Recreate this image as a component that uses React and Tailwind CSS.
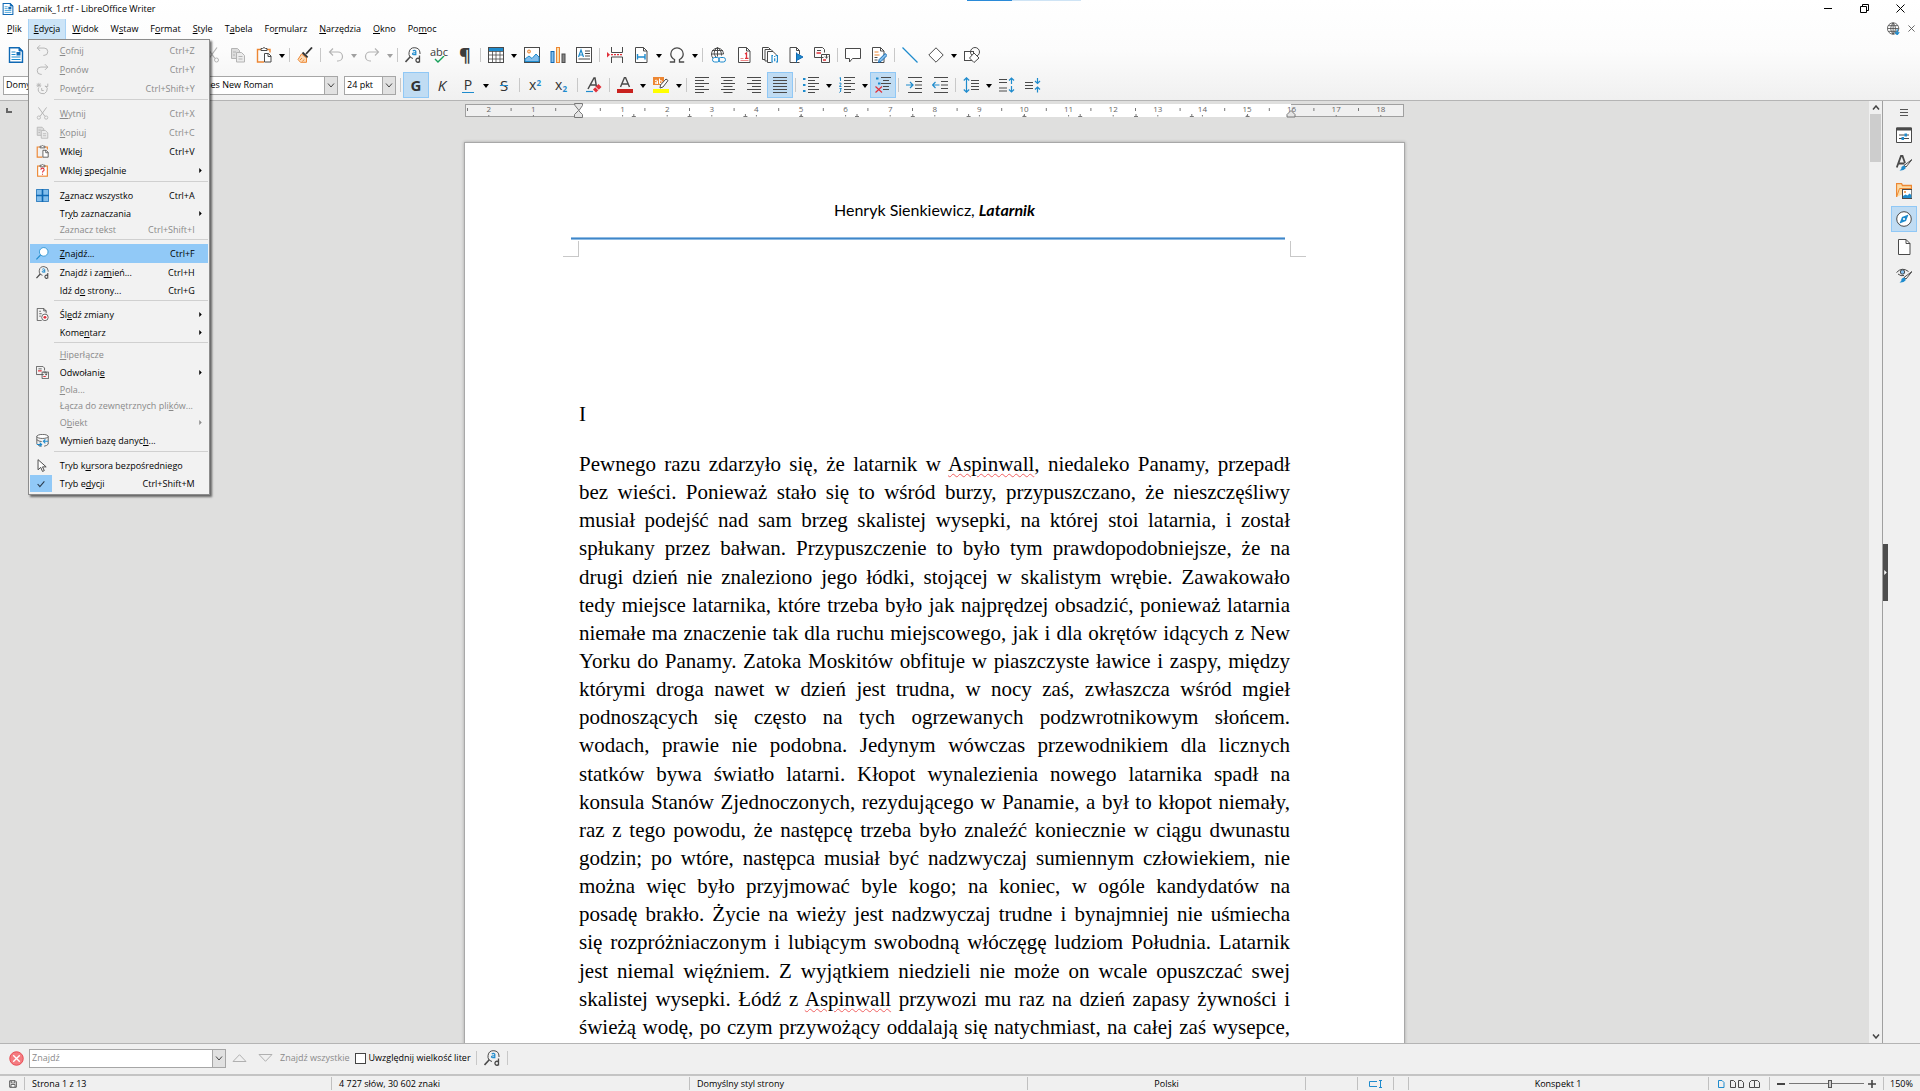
import { Fragment } from "react";
import clsx from "clsx";

const G = "#4a4a4a"; // icon outline
const B = "#1e8bcd"; // icon accent
const L = "#b4b4b4"; // disabled outline

const ICONS = {
  doc: (
    <>
      <path d="M1.500 .7h9.500l3.500 3.500v11H1.500z" fill="#fff" stroke="#1069b4" strokeWidth="1.4" />
      <path d="M11 .5v3.500h3.500z" stroke="#1069b4" fill="#1069b4" />
      <path d="M3.500 5h4M3.500 7.500h4M3.500 10h9M3.500 12.500h9" stroke="#1e8bcd" />
      <rect x="8.500" y="5" width="4" height="3.500" fill="#1069b4" />
    </>
  ),
  undo: <path d="M5 1.500 1.500 5l3.500 3.500M1.500 5h8.500a4.500 4.500 0 0 1 0 9h-1" stroke={L} strokeWidth="1.2" />,
  redo: <path d="M11 1.500 14.500 5 11 8.500M14.500 5H6a4.500 4.500 0 0 0 0 9h1" stroke={L} strokeWidth="1.2" />,
  repeat: (
    <>
      <path d="M3 7.500a5.500 5.500 0 1 0 8.500-3M14.500 2v3.500H11M7 7.500v3h2.500" stroke={L} strokeWidth="1.2" />
      <path d="M1 2l5 4M1 6l5-4M3.500 1v6M.5 4h6" stroke={L} />
    </>
  ),
  cut: (
    <>
      <path d="M3 .5 11 11.500M13 .5 5 11.500" stroke={L} strokeWidth="1.2" />
      <circle cx="3.500" cy="13" r="2" stroke={L} />
      <circle cx="12.500" cy="13" r="2" stroke={L} />
    </>
  ),
  copy: (
    <>
      <path d="M1.500 1.500h6l2 2v8h-8z" fill="#ddd" stroke={L} />
      <path d="M6.500 5.500h5l3 3v6.500h-8z" fill="#ececec" stroke={L} />
      <path d="M8.500 9.500h4M8.500 12h4M3 5h3M3 8h2" stroke={L} />
    </>
  ),
  paste: (
    <>
      <path d="M5 2.500H1.500v12.500H8M11 2.500h3v3" stroke="#ed8733" strokeWidth="1.4" />
      <path d="M5 3.500v-2h1.500L8 .5l1.500 1H11v2z" fill="#fff" stroke={G} />
      <path d="M8.500 6.500h4l2.500 2.500v6h-6.500z" fill="#fff" stroke={G} />
      <path d="M12 6.500V9.500h3" stroke={G} />
    </>
  ),
  pasteSpecial: (
    <>
      <rect x="2" y="2.500" width="12" height="12.500" fill="#fff" stroke="#ed8733" strokeWidth="1.4" />
      <path d="M5 3.500v-2h1.500L8 .5l1.500 1H11v2z" fill="#fff" stroke={G} />
      <path d="M6 7a2 2 0 1 1 2.500 2L8 10.500M8 12v1.200" stroke="#e0303a" strokeWidth="1.3" />
    </>
  ),
  brush: (
    <>
      <path d="M15 .5 9 7" stroke="#333" strokeWidth="1.8" />
      <path d="M5.500 5.500 10.500 10.500" stroke="#333" strokeWidth="2" />
      <path d="M4.500 7 1 12.500l2.500 2.800h6L9.500 11z" fill="#fbd9b5" stroke="#ed8733" />
      <path d="M3 13l2-2M5.500 14.500l1.500-2" stroke="#ed8733" />
    </>
  ),
  find: (
    <>
      <circle cx="9.500" cy="6" r="5.300" fill="#fff" stroke={B} />
      <path d="M5.500 10 .5 15.200" stroke={B} strokeWidth="1.5" />
    </>
  ),
  findReplace: (
    <>
      <path d="M15 7V6A5.500 5.500 0 1 0 8 11.500" stroke={G} />
      <path d="M5.500 9.500 .5 15" stroke={G} strokeWidth="1.6" />
      <path d="M7.800 4q1.700-1.300 3 .2v4M10.800 5.800q-3.300-.2-3.300 1.200.8 1.500 3.300 0" stroke={B} strokeWidth="1.2" />
      <path d="M14.500 8.500v7M14.500 12a2 2 0 1 0 0 2.500" stroke={G} strokeWidth="1.3" />
    </>
  ),
  table: (
    <>
      <rect x=".5" y=".5" width="15" height="15" fill="#fff" stroke={G} />
      <path d="M1 1h14v3H1z" fill={B} />
      <path d="M.5 4.500h15M.5 8h15M.5 12h15M4.500 4v11.500M8 4v11.500M12 4v11.500" stroke={G} strokeWidth=".8" />
    </>
  ),
  image: (
    <>
      <rect x=".5" y=".5" width="15" height="15" fill="#fff" stroke={G} />
      <circle cx="5" cy="4.500" r="1.500" fill="#fbd9b5" stroke="#ed8733" />
      <path d="M1 14.500V12l4-3 3 2.500 4-4.500 3 3v4.500z" fill="#83beec" stroke={B} />
    </>
  ),
  chart: (
    <>
      <rect x="1" y="4.500" width="3" height="11" fill="#83beec" stroke="#1069b4" />
      <rect x="6.500" y=".5" width="3" height="15" fill="#fbdca8" stroke="#ed8733" />
      <rect x="12" y="7" width="3" height="8.500" fill="#888" stroke={G} />
    </>
  ),
  textbox: (
    <>
      <rect x=".5" y=".5" width="15" height="15" fill="#fff" stroke={G} />
      <path d="M2.500 10 5 3l2.500 7M3.500 8h3" stroke={B} strokeWidth="1.2" />
      <path d="M9 4h5M9 6.500h5M9 9h5M2.500 12h11.500" stroke={G} />
    </>
  ),
  pageBreak: (
    <>
      <path d="M4.500 0v5.500h11V0M4.500 16v-6h11v6" stroke={G} />
      <path d="M4 7.700h12" stroke="#e0303a" strokeDasharray="2 1" strokeWidth="1.2" />
      <path d="M0 5v5.500l3-2.700z" fill="#e0303a" />
    </>
  ),
  field: (
    <>
      <path d="M2.500 .5h8l3.500 3.500v11.500H2.500z" fill="#fff" stroke={G} />
      <path d="M10.500 .5V4H14" stroke={G} />
      <path d="M4.500 7v5.500M12 7v5.500M4.500 10H12" stroke={B} strokeWidth="1.4" />
    </>
  ),
  omega: <path d="M.8 15h4.700v-2.500C2.500 11 1.800 9 1.800 7a6.200 6.200 0 0 1 12.400 0c0 2-.7 4-3.700 5.500V15h4.700" stroke={G} strokeWidth="1.3" />,
  link: (
    <>
      <path d="M4 12A6 6 0 1 1 13.500 7M7.500 .5c-4 3-4 6.500-1.500 9.500M7.500 .5c3 2.500 4 4.500 4 8M2 3.500h11M1 7h12.500M7.500 .5v9" stroke={G} />
      <rect x="2.500" y="10.500" width="7" height="4.500" rx="2.200" fill="#fff" stroke={B} />
      <rect x="8.500" y="10.500" width="7" height="4.500" rx="2.200" stroke={B} />
    </>
  ),
  footnote: (
    <>
      <path d="M2.500 .5h8l3.500 3.500v11.500H2.500z" fill="#fff" stroke={G} />
      <path d="M10.500 .5V4H14" stroke={G} />
      <path d="M9 7l1.500-1v5M9 11.300h3.500" stroke="#e0303a" strokeWidth="1.3" />
      <path d="M4.500 13.500h8M4.500 11.500h3" stroke="#e88" />
    </>
  ),
  endnote: (
    <>
      <path d="M3 12.500H.5v-12h6l2 2M5.500 14h-2.500V2.500h6l2 2" stroke={G} />
      <path d="M9.500 15.500h-4V4.500h5.500l3 3v1" fill="#fff" stroke={G} />
      <path d="M11 8.500h-1v6.500h1M14 8.500h1.500v6.500H14M12.700 9v1M12.700 11.200v3" stroke={B} strokeWidth="1.2" />
    </>
  ),
  bookmark: (
    <>
      <path d="M11.500 15.500H2V.5h6.500l3 3v4" fill="#fff" stroke={G} />
      <path d="M8.500 .5v3h3" stroke={G} />
      <path d="M8.500 5.500v10M8.500 6.500l6.500 3.500-6.500 3.500z" fill={B} stroke="#1069b4" />
    </>
  ),
  crossRef: (
    <>
      <path d="M9.500 10.500h-9V.5h8l2 2v3M3 3.500h4" stroke={G} />
      <path d="M2.500 6h4.500M9 13h3" stroke="#e0303a" strokeWidth="1.3" />
      <path d="M7.500 15.500v-8h8v8zM9 7.500h3.500v4M11 9.500l1.500 1.500 1.500-1.500" stroke={G} />
    </>
  ),
  comment: <path d="M.5 1.500h15v10H7.500L4.500 15v-3.500h-4z" fill="#fff" stroke={G} strokeLinejoin="round" />,
  track: (
    <>
      <path d="M1.500 .5h8l3.500 3.500v11.500H1.500z" fill="#fff" stroke={G} />
      <path d="M9.500 .5V4H13" stroke={G} />
      <path d="M3.500 5h4M3.500 8h5" stroke="#ed8733" />
      <path d="M3.500 10.500h3M3.500 13h3" stroke={G} />
      <path d="M7.500 15.500l.7-3 6-6 1.800 2-6 6z" fill="#83beec" stroke="#1069b4" />
    </>
  ),
  line: <path d="M.5 .5l15 15" stroke={B} strokeWidth="1.2" />,
  diamond: <path d="M8 .8 15.200 8 8 15.200.8 8z" fill="#fff" stroke={G} />,
  shapes: (
    <>
      <rect x=".5" y="4.500" width="9" height="9" stroke={G} fill="#fff" />
      <circle cx="11" cy="5" r="4.500" stroke={G} />
      <path d="M10 6l5 5-5 4.500L5.500 11z" stroke={G} fill="#fff" />
    </>
  ),
  clearFormat: (
    <>
      <path d="M2 12 8 1h1l1.500 9M4.500 8h6" stroke={G} strokeWidth="1.5" />
      <path d="M0 14.500h7" stroke={B} strokeWidth="1.200" />
      <path d="M7 12.500l5.500-5.500 3 3L10 15.500z" fill="#e0303a" />
      <path d="M9.500 10l3 3" stroke="#fff" />
    </>
  ),
  fontColor: (
    <>
      <path d="M3.500 10 7.500 .5h1L12.500 10M5 7h6" stroke={G} strokeWidth="1.4" />
      <path d="M0 12h16v4H0z" fill="#c9211e" />
    </>
  ),
  highlight: (
    <>
      <path d="M0 0h11v8H0z" fill="#ed8733" />
      <path d="M2 3.500q2-1 2.500.5v3M4.500 5q-2.500 0-2.500 1t2.500 0M6.500 1.500v5q3 .8 2.700-1.500T6.500 4" stroke="#fff" />
      <path d="M15 3.500 10 10l-3 1 .5-3 5.500-6z" fill="#fff" stroke={G} />
      <path d="M0 12h16v4H0z" fill="#ffff00" />
    </>
  ),
  left: <path d="M1 .5h14M1 3.500h9M1 6.500h14M1 9.500h9M1 12.500h14M1 15.500h9" stroke={G} />,
  center: <path d="M1 .5h14M3.500 3.500h9M1 6.500h14M3.500 9.500h9M1 12.500h14M3.500 15.500h9" stroke={G} />,
  right: <path d="M1 .5h14M6 3.500h9M1 6.500h14M6 9.500h9M1 12.500h14M6 15.500h9" stroke={G} />,
  justify: <path d="M1 .5h14M1 3.500h14M1 6.500h14M1 9.500h14M1 12.500h14M1 15.500h14" stroke={G} />,
  bullets: (
    <>
      <path d="M5 .5h11M5 3.500h7M5 6.500h11M5 9.500h7M5 12.500h11M5 15.500h7" stroke={G} />
      <path d="M0 1h2.500v2H0zM0 7h2.500v2H0zM0 13h2.500v2H0z" fill={B} />
    </>
  ),
  numbers: (
    <>
      <path d="M5 .5h11M5 3.500h7M5 6.500h11M5 9.500h7M5 12.500h11M5 15.500h7" stroke={G} />
      <path d="M.5 1 1.500.5v3.500M.3 6.200q2.400-.7 1.700 1L.5 9.500h2M.5 11.500h2L1.300 13q2 .8-1 2.500" stroke={B} />
    </>
  ),
  outline: (
    <>
      <path d="M6 .5h10M8 3.500h6M6 6.500h10M8 9.500h6M8 12.500h6" stroke={G} />
      <path d="M1 .5h2.500v2H1zM3 5.500h2.500v2H3z" fill={B} />
      <path d="M.5 9.500l6.500 6M7 9.500l-6.500 6" stroke="#e0303a" strokeWidth="1.2" />
    </>
  ),
  indent: (
    <>
      <path d="M2 .5h14M9 4.500h7M9 8h7M9 11.500h7M2 15.500h14" stroke={G} />
      <path d="M0 8h7M4 5l3 3-3 3" stroke={B} strokeWidth="1.200" />
    </>
  ),
  outdent: (
    <>
      <path d="M2 .5h14M9 4.500h7M9 8h7M9 11.500h7M2 15.500h14" stroke={G} />
      <path d="M7.500 8h-7M3.500 5l-3 3 3 3" stroke={B} strokeWidth="1.2" />
    </>
  ),
  spacing: (
    <>
      <path d="M8 3.500h8M8 6.500h8M8 9.500h8M8 12.500h8" stroke={G} />
      <path d="M3.500 1v14M.8 3.500 3.500.8l2.700 2.700M.8 12.500l2.700 2.700 2.700-2.700" stroke={B} strokeWidth="1.2" />
    </>
  ),
  spaceMore: (
    <>
      <path d="M0 2.500h8M0 5.500h8M0 11h8M0 14h8" stroke={G} />
      <path d="M12.500 7V1M10 3.500 12.500 1 15 3.500M12.500 9v6M10 12.500l2.500 2.500 2.500-2.500" stroke={B} strokeWidth="1.2" />
    </>
  ),
  spaceLess: (
    <>
      <path d="M0 5.500h8M0 8.500h8M0 11.500h8" stroke={G} />
      <path d="M12.500 1v5.500M10 4l2.500 2.500L15 4M12.500 15.500V10M10 12.500l2.500-2.500 2.500 2.500" stroke={B} strokeWidth="1.2" />
    </>
  ),
  selectAll: (
    <>
      <path d="M.5 .5h15v15H.5z" fill="#83beec" stroke="#1069b4" />
      <path d="M8 0v16M0 8h16" stroke="#1069b4" strokeWidth="2" />
    </>
  ),
  record: (
    <>
      <path d="M7 15.500H1.500V.5h8l3 3v3M4 4h2M4 7h3M4 10h2M9.500 .5v3h3" stroke={G} />
      <circle cx="11" cy="11.500" r="4" fill="#fff" stroke={G} />
      <circle cx="11" cy="11.500" r="1.800" fill="#e0303a" />
    </>
  ),
  database: (
    <>
      <path d="M1 3v9q2 3 6 3M15 3v9.500q-1.500 2-5 2.500M1 7q2.500 2.300 6 2.300" stroke={G} />
      <ellipse cx="8" cy="3" rx="7" ry="2.500" fill="#fff" stroke={G} />
      <path d="M15 9H9M11.500 6.500 9 9l2.500 2.500M1 13h6M4.500 10.500 7 13l-2.500 2.500" stroke={B} strokeWidth="1.3" />
    </>
  ),
  cursor: <path d="M2.500 .8v12.500l3.300-3 2.200 5 2.200-1-2.200-4.600h4.500z" fill="#fff" stroke={G} strokeWidth="1.200" />,
  check: <path d="M3.500 8l3 3.500 6-7" stroke="#2c3e50" strokeWidth="1.500" />,
  properties: (
    <>
      <path d="M.5 1h15v14.500H.5z" fill="#fff" stroke={G} />
      <path d="M.5 .5h15v3H.5z" fill={G} />
      <path d="M3 8h10M3 11.500h10" stroke={G} />
      <path d="M8.500 6.500h2.500v3H8.500zM5.500 10h2.500v3H5.500z" fill={B} />
    </>
  ),
  styles: (
    <>
      <path d="M.8 12.500 5 1h1.500l2.500 7M2.500 8.500h6" stroke={G} strokeWidth="1.8" />
      <path d="M16 4.500 10 12l-2-1.500z" fill="#fff" stroke={G} />
      <path d="M7.500 10.500q2.500.5 2 3-2 2.500-6 2 2.500-1.500 2-3.500z" fill={B} />
    </>
  ),
  gallery: (
    <>
      <path d="M.5 14v-13.500h5l1 2h9v4" fill="#fbdca8" stroke="#ed8733" strokeWidth="1.300" />
      <path d="M.5 14 3.500 5.500h12.500" fill="#fbdca8" stroke="#ed8733" />
      <rect x="6.500" y="6.500" width="9.300" height="9" fill="#fff" stroke={G} />
      <circle cx="9" cy="9" r="1" fill="#ed8733" />
      <path d="M7 15v-2l2.500-1.500 2 1 2-2 1.800 1.500v3z" fill={B} />
    </>
  ),
  navigator: (
    <>
      <circle cx="8" cy="8" r="7.300" fill="#fff" stroke={G} />
      <path d="M12.500 3.500 10 10l-6.500 2.500L6 6z" fill={B} />
      <circle cx="8" cy="8" r="1.100" fill="#fff" />
    </>
  ),
  page: (
    <>
      <path d="M2.500 .5h7.500l4 4v11H2.500z" fill="#fff" stroke={G} />
      <path d="M10 .5v4h4" stroke={G} />
    </>
  ),
  inspector: (
    <>
      <path d="M.5 5.500Q6-.5 12.500 4.500M2 7q3 2.500 6 1.500" stroke={G} />
      <circle cx="6.500" cy="5" r="2.200" fill="#83beec" stroke={G} />
      <path d="M16 4.500 10 12l-2-1.500z" fill="#fff" stroke={G} />
      <path d="M7.500 10.500q2.500.5 2 3-2 2.500-6 2 2.500-1.500 2-3.500z" fill={B} />
    </>
  ),
  globe: (
    <>
      <circle cx="7.500" cy="8" r="7" stroke={G} fill="#fff" />
      <path d="M7.500 1v14M.5 8h14M1.500 4.500h12M1.500 11.500h12M7.500 1q-6 7 0 14M7.500 1q6 7 0 14" stroke={G} />
      <path d="M12.500 9v6M10 12.500l2.500 3 2.500-3" stroke={B} strokeWidth="1.6" />
    </>
  ),
  save: (
    <>
      <path d="M1.500 1.500h11l2 2v11h-13z" stroke={G} strokeWidth="2" fill="#fff" />
      <path d="M4.500 2v4h7V2M4 14v-5h8v5" stroke={G} strokeWidth="1.600" />
    </>
  ),
};

function Icon({ name, className = "size-4" }) {
  return (
    <svg viewBox="0 0 16 16" fill="none" className={clsx("shrink-0", className)} aria-hidden="true">
      {ICONS[name]}
    </svg>
  );
}

// "_" marks the letter that follows it as the access key
function Label({ text }) {
  const at = text.indexOf("_");
  if (at < 0) return text;
  return (
    <>
      {text.slice(0, at)}
      <span className="underline underline-offset-1">{text[at + 1]}</span>
      {text.slice(at + 2)}
    </>
  );
}

const MENUS = ["_Plik", "_Edycja", "_Widok", "W_staw", "F_ormat", "_Style", "T_abela", "Fo_rmularz", "_Narzędzia", "_Okno", "Po_moc"];

const EDIT_MENU = [
  { icon: "undo", label: "_Cofnij", keys: "Ctrl+Z", disabled: true },
  { icon: "redo", label: "_Ponów", keys: "Ctrl+Y", disabled: true },
  { icon: "repeat", label: "Pow_tórz", keys: "Ctrl+Shift+Y", disabled: true },
  null,
  { icon: "cut", label: "_Wytnij", keys: "Ctrl+X", disabled: true },
  { icon: "copy", label: "_Kopiuj", keys: "Ctrl+C", disabled: true },
  { icon: "paste", label: "Wkle_j", keys: "Ctrl+V" },
  { icon: "pasteSpecial", label: "Wklej _specjalnie", sub: true },
  null,
  { icon: "selectAll", label: "Z_aznacz wszystko", keys: "Ctrl+A" },
  { label: "Tr_yb zaznaczania", sub: true },
  { label: "Zaznacz tekst", keys: "Ctrl+Shift+I", disabled: true },
  null,
  { icon: "find", label: "_Znajdź...", keys: "Ctrl+F", active: true },
  { icon: "findReplace", label: "Znajdź i za_mień...", keys: "Ctrl+H" },
  { label: "Idź d_o strony...", keys: "Ctrl+G" },
  null,
  { icon: "record", label: "Śl_edź zmiany", sub: true },
  { label: "Kome_ntarz", sub: true },
  null,
  { label: "_Hiperłącze", disabled: true },
  { icon: "crossRef", label: "Odwołani_e", sub: true },
  { label: "_Pola...", disabled: true },
  { label: "Łącza do zewnętrznych pli_ków...", disabled: true },
  { label: "O_biekt", sub: true, disabled: true },
  { icon: "database", label: "Wymień bazę danyc_h..." },
  null,
  { icon: "cursor", label: "Tryb k_ursora bezpośredniego" },
  { label: "Tryb e_dycji", keys: "Ctrl+Shift+M", checked: true },
];

function EditMenu() {
  return (
    <div role="menu" className="absolute top-full left-0 z-20 flex w-[182px] flex-col border border-[#8c8c8c] bg-[#f2f2f2] px-px pt-px pb-[2px] shadow-[2px_2px_2px_rgba(0,0,0,0.55)]">
      {EDIT_MENU.map((item, i) =>
        item === null ? (
          <div key={i} role="separator" className="h-[6px] pt-px pl-6">
            <div className="h-px bg-[#d0d0d0]" />
          </div>
        ) : (
          <button
            key={i}
            type="button"
            role="menuitem"
            disabled={item.disabled}
            className={clsx(
              "flex w-full items-center whitespace-nowrap text-left",
              item.icon ? "h-[19px]" : item.disabled && !item.sub ? "h-4" : "h-[17px]",
              item.disabled ? "text-[#8a8a8a]" : "text-black",
              item.active && "bg-[#91c9f7]"
            )}
          >
            <span className={clsx("mr-2 flex h-full w-[22px] items-center", item.checked ? "justify-center bg-[#91c9f7]" : "justify-end")}>
              {item.icon && <Icon name={item.icon} className="mr-[3px] size-[13px]" />}
              {item.checked && <Icon name="check" className="size-3" />}
            </span>
            <span className="flex-1">
              <Label text={item.label} />
            </span>
            {item.keys && <span className="mr-[13px]">{item.keys}</span>}
            {item.sub && (
              <svg viewBox="0 0 3 6" className="mr-[6px] h-[5px] w-[3px] fill-current" aria-hidden="true">
                <path d="M0 0l3 3-3 3z" />
              </svg>
            )}
          </button>
        )
      )}
    </div>
  );
}

function Tool({ name, label, active, children }) {
  return (
    <button
      type="button"
      aria-label={label || name}
      className={clsx(
        "flex h-[26px] w-[26px] shrink-0 items-center justify-center",
        active && "border border-[#90c8f6] bg-[#c0dcf3]"
      )}
    >
      {children || <Icon name={name} />}
    </button>
  );
}

function Arrow({ muted }) {
  return (
    <button type="button" aria-label="Więcej" className="flex h-[26px] w-[10px] shrink-0 items-center justify-center">
      <svg viewBox="0 0 6 4" className={clsx("mt-[2px] h-1 w-[6px]", muted ? "fill-[#a0a0a0]" : "fill-black")} aria-hidden="true">
        <path d="M0 0h6L3 4z" />
      </svg>
    </button>
  );
}

function Sep({ wide }) {
  return (
    <span className={clsx("flex shrink-0 justify-center", wide ? "w-[7px]" : "w-[5px]")}>
      <span className="h-[14px] w-px bg-[#c8c8c8]" />
    </span>
  );
}

// "|" separator, "||" wide separator, "v" drop-down arrow, "." greyed drop-down arrow
const STANDARD_BAR = [
  "doc", "v", "gallery", "v", "save", "v", "|", "page", "field", "findReplace", "|",
  "cut", "copy", "paste", "v", "|", "brush", "|", "undo", ".", "redo", ".", "|",
  "findReplace", "abc", "pilcrow", "|", "table", "v", "image", "chart", "textbox", "|",
  "pageBreak", "field", "v", "omega", "v", "|", "link", "footnote", "endnote", "bookmark", "crossRef", "|",
  "comment", "track", "|", "line", "diamond", "v", "shapes",
];

const FORMAT_BAR = [
  "bold", "italic", "underline", "v", "strike", "|", "super", "subscript", "||", "clearFormat", "|",
  "fontColor", "v", "highlight", "v", "|", "left", "center", "right", "justify", "|",
  "bullets", "v", "numbers", "v", "outline", "|", "indent", "outdent", "|", "spacing", "v", "spaceMore", "spaceLess",
];

const ACTIVE = ["bold", "justify", "outline"];

const GLYPHS = {
  abc: (
    <span className="flex flex-col items-center text-[11px] leading-[9px] text-[#3c3c3c]">
      abc
      <svg viewBox="0 0 12 7" className="h-[7px] w-3" fill="none" aria-hidden="true">
        <path d="M2 3l3 3 6-6" stroke="#18a05a" strokeWidth="1.4" />
      </svg>
    </span>
  ),
  pilcrow: <span className="text-[18px] leading-[26px] font-bold text-[#3c3c3c]">¶</span>,
  bold: <span className="text-[15px] font-bold text-[#333]">G</span>,
  italic: <span className="text-[15px] italic text-[#333]">K</span>,
  underline: <span className="border-b border-[#1e8bcd] px-[2px] text-[14px] leading-[15px] text-[#333]">P</span>,
  strike: <span className="text-[15px] text-[#333] line-through decoration-[#1e8bcd] decoration-1">S</span>,
  super: (
    <span className="text-[14px] text-[#333]">
      x<sup className="text-[8px] font-bold text-[#1e8bcd]">2</sup>
    </span>
  ),
  subscript: (
    <span className="text-[14px] text-[#333]">
      x<sub className="text-[8px] font-bold text-[#1e8bcd]">2</sub>
    </span>
  ),
};

function ToolRow({ items }) {
  return items.map((name, i) => {
    if (name === "|" || name === "||") return <Sep key={i} wide={name === "||"} />;
    if (name === "v" || name === ".") return <Arrow key={i} muted={name === "."} />;
    return (
      <Tool key={i} name={name} active={ACTIVE.includes(name)}>
        {GLYPHS[name]}
      </Tool>
    );
  });
}

function Chevron() {
  return (
    <svg viewBox="0 0 8 5" className="h-[5px] w-2" fill="none" aria-hidden="true">
      <path d="M1 .5l3 3.500 3-3.500" stroke="#444" />
    </svg>
  );
}

function Combo({ label, value, className }) {
  return (
    <div className={clsx("flex h-[19px] shrink-0 border border-[#a6a6a6] bg-white", className)}>
      <select aria-label={label} defaultValue={value} className="min-w-0 flex-1 appearance-none pl-[2px] text-black outline-none">
        <option>{value}</option>
      </select>
      <span className="pointer-events-none flex w-[13px] items-center justify-center border-l border-[#a6a6a6] bg-[#e1e1e1]">
        <Chevron />
      </span>
    </div>
  );
}

function TitleBar() {
  return (
    <div className="flex h-[18px] items-start">
      <div className="flex h-full flex-1 items-center gap-1 pl-[2px] text-black">
        <Icon name="doc" className="size-3" />
        Latarnik_1.rtf - LibreOffice Writer
      </div>
      <div className="ml-[126px] flex w-[114px]">
        <span className="h-px w-[45px] bg-[#2a8ad8]" />
        <span className="h-px flex-1 bg-[#cfe4f5]" />
      </div>
      <div className="flex h-4 flex-1 justify-end">
        <button type="button" aria-label="Minimalizuj" className="flex w-9 items-center justify-center">
          <svg viewBox="0 0 9 9" className="size-[9px]"><path d="M0 4.500h8" stroke="#000" /></svg>
        </button>
        <button type="button" aria-label="Przywróć" className="flex w-9 items-center justify-center">
          <svg viewBox="0 0 9 9" className="size-[9px]" fill="none"><path d="M.5 2.500h6v6h-6zM2.500 2V.5h6v6H7" stroke="#000" /></svg>
        </button>
        <button type="button" aria-label="Zamknij" className="mr-[2px] flex w-9 items-center justify-center">
          <svg viewBox="0 0 9 9" className="size-[9px]"><path d="M.5 .5l8 8M8.500 .5l-8 8" stroke="#000" /></svg>
        </button>
      </div>
    </div>
  );
}

function MenuBar() {
  return (
    <nav className="flex h-[21px] items-center pl-px">
      {MENUS.map((text) => {
        const open = text === "_Edycja";
        return (
          <div key={text} className="relative h-[21px] pt-px">
            <button
              type="button"
              className={clsx("flex h-5 items-center border-x px-[5px] text-black", open ? "border-[#a8d2f5] bg-[#cce4f7]" : "border-transparent")}
            >
              <span><Label text={text} /></span>
            </button>
            {open && <EditMenu />}
          </div>
        );
      })}
      <span className="flex-1" />
      <Icon name="globe" className="mr-2 size-[13px]" />
      <button type="button" aria-label="Zamknij dokument" className="mr-[5px]">
        <svg viewBox="0 0 8 8" className="size-[7px]"><path d="M.5 .5l7 7M7.500 .5l-7 7" stroke="#555" /></svg>
      </button>
    </nav>
  );
}

const CM = 44.6;
const ORIGIN = 114;

function Ruler() {
  const marks = [];
  for (let n = -2; n <= 18; n++) {
    const x = ORIGIN + n * CM;
    marks.push(
      <Fragment key={n}>
        {n !== 0 && (
          <text x={x} y="9" textAnchor="middle" fontSize="8" fill="#666">
            {Math.abs(n)}
          </text>
        )}
        {n !== 0 && <path d={`M${x} 12v1.500`} stroke="#777" />}
        {n < 18 && <path d={`M${x + CM / 2} 5v3`} stroke="#777" />}
      </Fragment>
    );
  }
  const tabs = Array.from({ length: 12 }, (_, i) => ORIGIN + (i + 1) * 55.8);
  return (
    <svg viewBox="0 0 941 15" className="mx-auto h-[15px] w-[941px]" fill="none" role="img" aria-label="Linijka">
      <rect x="1.500" y="1.500" width="938" height="12" fill="#f0f0f0" stroke="#a0a0a0" />
      <path d="M114 1h713v13H114z" fill="#fff" />
      {marks}
      <path d="M3.500 5v3" stroke="#777" />
      {tabs.map((x) => (
        <path key={x} d={`M${x - 2} 13.500h4M${x} 11v3`} stroke="#777" />
      ))}
      <path d="M110.500 .5h8v2l-3.500 5-4-5zM114.500 7.500l4 4v3h-8v-3z" fill="#e4e4e4" stroke="#777" />
      <path d="M827 7.500l4 4v2.500h-8v-2.500z" fill="#e4e4e4" stroke="#777" />
    </svg>
  );
}

const LINES = [
  "Pewnego razu zdarzyło się, że latarnik w *Aspinwall*, niedaleko Panamy, przepadł",
  "bez wieści. Ponieważ stało się to wśród burzy, przypuszczano, że nieszczęśliwy",
  "musiał podejść nad sam brzeg skalistej wysepki, na której stoi latarnia, i został",
  "spłukany przez bałwan. Przypuszczenie to było tym prawdopodobniejsze, że na",
  "drugi dzień nie znaleziono jego łódki, stojącej w skalistym wrębie. Zawakowało",
  "tedy miejsce latarnika, które trzeba było jak najprędzej obsadzić, ponieważ latarnia",
  "niemałe ma znaczenie tak dla ruchu miejscowego, jak i dla okrętów idących z New",
  "Yorku do Panamy. Zatoka Moskitów obfituje w piaszczyste ławice i zaspy, między",
  "którymi droga nawet w dzień jest trudna, w nocy zaś, zwłaszcza wśród mgieł",
  "podnoszących się często na tych ogrzewanych podzwrotnikowym słońcem.",
  "wodach, prawie nie podobna. Jedynym wówczas przewodnikiem dla licznych",
  "statków bywa światło latarni. Kłopot wynalezienia nowego latarnika spadł na",
  "konsula Stanów Zjednoczonych, rezydującego w Panamie, a był to kłopot niemały,",
  "raz z tego powodu, że następcę trzeba było znaleźć koniecznie w ciągu dwunastu",
  "godzin; po wtóre, następca musiał być nadzwyczaj sumiennym człowiekiem, nie",
  "można więc było przyjmować byle kogo; na koniec, w ogóle kandydatów na",
  "posadę brakło. Życie na wieży jest nadzwyczaj trudne i bynajmniej nie uśmiecha",
  "się rozpróżniaczonym i lubiącym swobodną włóczęgę ludziom Południa. Latarnik",
  "jest niemal więźniem. Z wyjątkiem niedzieli nie może on wcale opuszczać swej",
  "skalistej wysepki. Łódź z *Aspinwall* przywozi mu raz na dzień zapasy żywności i",
  "świeżą wodę, po czym przywożący oddalają się natychmiast, na całej zaś wysepce,",
];

function Line({ text }) {
  const [before, word, after] = text.split("*");
  return (
    <span className="block whitespace-nowrap [text-align-last:justify]">
      {before}
      {word && <span className="underline decoration-[#f06060] decoration-wavy decoration-1 underline-offset-2">{word}</span>}
      {after}
    </span>
  );
}

function Page() {
  return (
    <article className="mx-auto mt-6 w-[941px] border border-b-0 border-[#a8a8a8] bg-white px-[114px] pt-[55px] pb-10 text-black shadow-[0_0_3px_rgba(0,0,0,0.25)]">
      <p className="text-center font-[Lato] text-[16px] leading-[24px]">
        Henryk Sienkiewicz, <b className="italic">Latarnik</b>
      </p>
      <div className="mt-[15px] mr-[5px] -ml-2 h-[3px] border-y border-[#8fbbe3] bg-[#3f86c8]" />
      <div className="-mx-4 flex justify-between pt-px">
        <span className="h-4 w-4 border-r border-b border-[#c8c8c8]" />
        <span className="h-4 w-4 border-b border-l border-[#c8c8c8]" />
      </div>
      <div className="pt-[143px] font-['Liberation_Serif',serif] text-[21px] leading-[28px]">
        <p>I</p>
        <p className="mt-[22px] grid h-[591px] content-between">
          {LINES.map((text) => (
            <Line key={text} text={text} />
          ))}
        </p>
      </div>
    </article>
  );
}

function Sidebar() {
  return (
    <aside className="flex w-[38px] shrink-0 border-l border-[#a0a0a0] bg-[#f0f0f0]">
      <button type="button" aria-label="Ukryj panel boczny" className="my-auto flex h-[57px] w-[5px] items-center justify-center bg-[#4d4d4d]">
        <svg viewBox="0 0 3 6" className="h-[5px] w-[3px] fill-white" aria-hidden="true"><path d="M0 0l3 3-3 3z" /></svg>
      </button>
      <div className="flex flex-1 flex-col items-center gap-[2px] pt-[7px]">
        <button type="button" aria-label="Ustawienia panelu" className="mb-1 flex h-2 items-center">
          <svg viewBox="0 0 8 7" className="h-[7px] w-2"><path d="M0 .5h8M0 3.500h8M0 6.500h8" stroke="#555" /></svg>
        </button>
        {["properties", "styles", "gallery", "navigator", "page", "inspector"].map((name) => (
          <Tool key={name} name={name} active={name === "navigator"} />
        ))}
      </div>
    </aside>
  );
}

function FindBar() {
  return (
    <div className="flex h-[31px] shrink-0 items-center border-t border-[#b4b4b4] bg-[#f0f0f0] pb-[2px] pl-[9px]">
      <button type="button" aria-label="Zamknij pasek">
        <svg viewBox="0 0 16 16" className="size-[15px]" fill="none">
          <circle cx="8" cy="8" r="7.200" fill="#f47b80" stroke="#e8484f" />
          <path d="M4.500 4.500l7 7M11.500 4.500l-7 7" stroke="#fff" strokeWidth="1.500" />
        </svg>
      </button>
      <div className="ml-[5px] flex h-[19px] w-[197px] border border-[#a6a6a6] bg-white">
        <input aria-label="Znajdź" placeholder="Znajdź" className="min-w-0 flex-1 pl-[2px] outline-none placeholder:text-[#8a8a8a]" />
        <button type="button" aria-label="Historia" className="flex w-[13px] items-center justify-center border-l border-[#a6a6a6] bg-[#e1e1e1]">
          <Chevron />
        </button>
      </div>
      <button type="button" aria-label="Poprzednie" className="flex w-[26px] justify-center">
        <svg viewBox="0 0 15 8" className="h-2 w-[15px]" fill="none"><path d="M1 7.500 7.500 .7 14 7.500z" stroke="#b0b0b0" /></svg>
      </button>
      <button type="button" aria-label="Następne" className="flex w-[26px] justify-center">
        <svg viewBox="0 0 15 8" className="h-2 w-[15px]" fill="none"><path d="M1 .5l6.500 6.800L14 .5z" stroke="#b0b0b0" /></svg>
      </button>
      <button type="button" className="ml-[2px] text-[#8a8a8a]">Znajdź wszystkie</button>
      <label className="ml-[5px] flex items-center gap-[3px] text-black">
        <input type="checkbox" className="size-[11px] appearance-none border border-[#444] bg-white" />
        Uwzględnij wielkość liter
      </label>
      <span className="ml-[3px] flex items-center">
        <Sep />
        <Tool name="findReplace" label="Znajdź i zamień" />
        <Sep />
      </span>
    </div>
  );
}

function StatusBar() {
  const cell = "flex items-center border-r border-[#c0c0c0] h-[13px] px-[7px]";
  return (
    <footer className="grid h-[17px] shrink-0 grid-cols-[25px_307fr_358fr_338fr_278fr_52px_36px_14px_301fr_61px_114px_36px] items-center border-t-2 border-[#c4c4c4] bg-[#f0f0f0] text-black">
      <span className={cell}><Icon name="save" className="ml-[2px] size-2" /></span>
      <span className={cell}>Strona 1 z 13</span>
      <span className={cell}>4 727 słów, 30 602 znaki</span>
      <span className={cell}>Domyślny styl strony</span>
      <span className={clsx(cell, "justify-center")}>Polski</span>
      <span className={cell} />
      <span className={clsx(cell, "justify-center")}>
        <svg viewBox="0 0 14 8" className="h-2 w-[14px] shrink-0" fill="none"><path d="M8 1.500H.5v5H8M10 .5h3M11.500 .5v7M10 7.500h3" stroke={B} /></svg>
      </span>
      <span className={cell} />
      <span className={clsx(cell, "justify-center")}>Konspekt 1</span>
      <span className={clsx(cell, "justify-end")}>
        <svg viewBox="0 0 44 8" className="h-2 w-[44px] shrink-0" fill="none">
          <path d="M.5 .5h3.500l2 2v5H.5z" stroke={B} />
          <path d="M12.500 .5h3l2 2v5h-5zM20.500 .5h3l2 2v5h-5zM31.500 2.500l2-2h3v7h-5zM36.500 .5h3l2 2v5h-5" stroke={G} />
        </svg>
      </span>
      <span className={clsx(cell, "gap-1")}>
        <button type="button" aria-label="Pomniejsz" className="h-[2px] w-2 shrink-0 bg-[#444]" />
        <input
          type="range"
          aria-label="Powiększenie"
          defaultValue="55"
          className="h-2 min-w-0 flex-1 appearance-none bg-[linear-gradient(#777,#777)] bg-[length:100%_1px] bg-center bg-no-repeat [&::-webkit-slider-thumb]:h-2 [&::-webkit-slider-thumb]:w-1 [&::-webkit-slider-thumb]:appearance-none [&::-webkit-slider-thumb]:border [&::-webkit-slider-thumb]:border-[#555] [&::-webkit-slider-thumb]:bg-[#ccc]"
        />
        <button type="button" aria-label="Powiększ">
          <svg viewBox="0 0 8 8" className="size-2"><path d="M4 0v8M0 4h8" stroke="#444" strokeWidth="1.600" /></svg>
        </button>
      </span>
      <span className="pl-[6px]">150%</span>
    </footer>
  );
}

export default function App() {
  return (
    <div className="flex h-screen flex-col overflow-hidden bg-[#dfdfde] font-['Open_Sans',sans-serif] text-[9px] leading-[12px]">
      <header className="shrink-0 border-b border-[#b4b4b4] bg-linear-to-b from-white via-[#fcfcfc] to-[#f0f0f0]">
        <TitleBar />
        <MenuBar />
        <div className="flex h-[31px] items-center overflow-hidden pl-[3px]">
          <ToolRow items={STANDARD_BAR} />
        </div>
        <div className="flex h-[30px] items-center overflow-hidden pl-[3px]">
          <Combo label="Styl akapitu" value="Domyślny styl akapitu" className="w-[132px]" />
          <Tool name="styles" />
          <Tool name="inspector" />
          <Sep />
          <Combo label="Czcionka" value="Times New Roman" className="mr-[6px] w-[146px]" />
          <Combo label="Rozmiar czcionki" value="24 pkt" className="mr-[2px] w-[52px]" />
          <Sep />
          <ToolRow items={FORMAT_BAR} />
        </div>
      </header>

      <div className="flex min-h-0 flex-1">
        <main className="relative min-w-0 flex-1 overflow-hidden pt-[2px]">
          <svg viewBox="0 0 6 5" className="absolute top-[7px] left-[6px] h-[5px] w-[6px]" fill="none" aria-hidden="true">
            <path d="M1 0v4h5" stroke="#666" strokeWidth="2" />
          </svg>
          <Ruler />
          <Page />
        </main>
        <div className="flex w-[13px] shrink-0 flex-col items-center bg-[#f0f0f0]">
          <svg viewBox="0 0 8 5" className="my-1 h-[5px] w-2 shrink-0" fill="none"><path d="M1 4.500l3-3.500 3 3.500" stroke="#444" strokeWidth="1.500" /></svg>
          <div className="h-12 w-[11px] bg-[#cdcdcd]" />
          <svg viewBox="0 0 8 5" className="mt-auto mb-1 h-[5px] w-2" fill="none"><path d="M1 .5l3 3.500 3-3.500" stroke="#444" strokeWidth="1.500" /></svg>
        </div>
        <Sidebar />
      </div>

      <FindBar />
      <StatusBar />
    </div>
  );
}
